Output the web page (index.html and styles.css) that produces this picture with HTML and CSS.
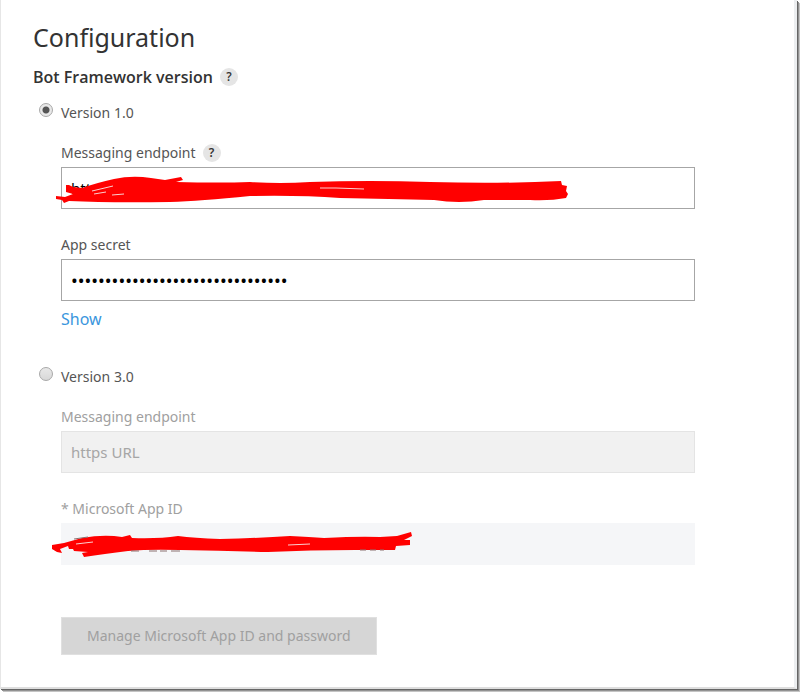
FILE: index.html
```html
<!DOCTYPE html>
<html lang="en">
<head>
    <meta charset="UTF-8">
    <meta name="viewport" content="width=device-width, initial-scale=1.0">
    <title>Configuration</title>
    <link rel="stylesheet" href="styles.css">
</head>
<body>
    <main class="panel">
        <h1>Configuration</h1>
        <h2>Bot Framework version <button type="button" class="help" aria-label="Help on versions">?</button></h2>

        <form>
            <!-- Version 1.0 -->
            <div class="version">
                <input type="radio" name="version" id="version1" checked>
                <label for="version1">Version 1.0</label>
            </div>
            <div class="settings">
                <div class="field">
                    <div class="caption">
                        <label for="endpoint1">Messaging endpoint</label>
                        <button type="button" class="help" aria-label="Help on endpoint">?</button>
                    </div>
                    <div class="control">
                        <input type="text" id="endpoint1" value="https://">
                        <svg class="redact" width="516" height="42" viewBox="56 167 516 42" aria-hidden="true">
                            <path d="M66 185L69 185L73 187L82 188Q96 183 114 179Q132 175 151 178L165 180L181 177L183 180L176 182Q220 183 250 182Q280 184 310 182Q370 180 430 182Q500 184 561 181L562 185L567 186L566 191L568 194L566 198Q550 201 530 200L484 200Q459 204 434 200Q390 199 340 198Q300 195 250 196Q200 201 170 202Q110 203 69 201L64 203L62 200L56 199V196L65 197L73 194L66 192Z"/>
                            <path class="gap" d="M92 191L113 186M94 194L106 192M112 195L124 194M320 188L336 188L364 189"/>
                        </svg>
                    </div>
                </div>
                <div class="field">
                    <div class="caption">
                        <label for="secret">App secret</label>
                    </div>
                    <div class="control">
                        <input type="password" id="secret" value="0123456789abcdef0123456789abcdef">
                    </div>
                    <a href="#" class="show">Show</a>
                </div>
            </div>

            <!-- Version 3.0 -->
            <div class="version">
                <input type="radio" name="version" id="version3">
                <label for="version3">Version 3.0</label>
            </div>
            <div class="settings disabled">
                <div class="field">
                    <div class="caption">
                        <label for="endpoint3">Messaging endpoint</label>
                    </div>
                    <div class="control">
                        <input type="text" id="endpoint3" placeholder="https URL" disabled>
                    </div>
                </div>
                <div class="field">
                    <div class="caption">
                        <label for="appId">* Microsoft App ID</label>
                    </div>
                    <div class="control">
                        <input type="text" id="appId" class="plain" disabled>
                        <svg class="redact redact-id" width="364" height="42" viewBox="51 524 364 42" aria-hidden="true">
                            <path d="M52 546L64 544L82 539Q104 535 122 538L130 536L132 539Q158 540 178 537Q194 539 220 540Q260 539 290 537Q310 538 324 539Q360 537 380 538L397 537L411 533L412 537L404 541L410 541V546L396 547L395 551L355 551Q310 551 268 553Q225 552 180 551Q150 550 128 552Q104 555 84 558L82 554L88 553L74 552L73 550L69 550L68 547L60 550L62 554L57 553L52 550Z"/>
                            <path class="gap" d="M76 545L93 543M288 546L310 545"/>
                            <path class="speck" d="M74 540L88 538M131 552h8M149 552h8M160 552h7M171 552h9M360 551h6M370 551h6M380 551h4"/>
                        </svg>
                    </div>
                </div>
                <button type="button" class="manage" disabled>Manage Microsoft App ID and password</button>
            </div>
        </form>
    </main>
</body>
</html>
```

FILE: styles.css
```css
* {
    box-sizing: border-box;
}

body {
    display: flex;
    min-height: 100vh;
    margin: 0;
    padding: 0 3px 3px 0;
    background-color: #fff;
    color: #555;
    font-family: "Noto Sans", "Open Sans", sans-serif;
    font-size: 14px;
    line-height: 20px;
}

.panel {
    flex: 1;
    padding: 19px 99px 32px 32px;
    border-left: 1px solid #e6e6e6;
    border-right: 3px solid #eceef0;
    border-bottom: 2px solid #dedede;
    box-shadow: 1px 1px #666, 2px 2px #929292, 3px 3px #c4c4c4;
}

h1 {
    margin: 0 0 10px;
    color: #333;
    font-size: 25px;
    font-weight: 400;
    line-height: 36px;
}

h2 {
    display: flex;
    align-items: center;
    gap: 7px;
    margin: 0 0 14px;
    color: #333;
    font-family: "Open Sans", "Noto Sans", sans-serif;
    font-size: 16px;
    font-weight: 600;
    line-height: 24px;
}

.help {
    width: 18px;
    height: 18px;
    padding: 0;
    border: none;
    border-radius: 50%;
    background-color: #e5e5e5;
    color: #333;
    font-family: inherit;
    font-size: 12px;
    font-weight: 600;
    line-height: 18px;
}

.version {
    display: flex;
    align-items: flex-start;
    gap: 8px;
    padding-left: 6px;
}

.version input {
    appearance: none;
    width: 14px;
    height: 14px;
    margin: 0;
    border: 1px solid #a8a8a8;
    border-radius: 50%;
    background: linear-gradient(#e8e8e8, #d8d8d8);
}

.version input:checked {
    background: radial-gradient(circle, #555 3px, #e8e8e8 4px);
}

.settings {
    padding: 20px 0 36px 28px;
}

.field {
    margin-bottom: 26px;
}

.caption {
    display: flex;
    align-items: center;
    gap: 7px;
    margin-bottom: 4px;
}

.control {
    position: relative;
}

.control input {
    display: block;
    width: 100%;
    height: 42px;
    padding: 0 9px;
    border: 1px solid #a6a6a6;
    background-color: #fff;
    color: #000;
    font-family: inherit;
    font-size: 15px;
}

.control input[type="password"] {
    font-size: 18px;
}

.redact {
    position: absolute;
    top: 0;
    left: -5px;
    fill: #f00;
}

.redact-id {
    left: -10px;
}

.redact .gap {
    fill: none;
    stroke: #fbd0d0;
}

.redact .speck {
    fill: none;
    stroke: #8a7070;
}

.show {
    display: inline-block;
    margin-top: 6px;
    color: #3a96dd;
    font-size: 16px;
    line-height: 24px;
    text-decoration: none;
}

.settings .field:last-child {
    margin-bottom: 0;
}

.disabled {
    padding-bottom: 0;
    color: #a0a0a0;
}

.disabled .control input {
    border-color: #e4e4e4;
    background-color: #f1f1f1;
}

.disabled .control .plain {
    border-color: #f5f6f8;
    background-color: #f5f6f8;
}

.control input::placeholder {
    color: #a6a6a6;
}

.manage {
    margin-top: 26px;
    padding: 8px 25px;
    border: 1px solid #e0e0e0;
    background-color: #d6d6d6;
    color: #a0a0a0;
    font-family: inherit;
    font-size: 14px;
    line-height: 20px;
}
```
